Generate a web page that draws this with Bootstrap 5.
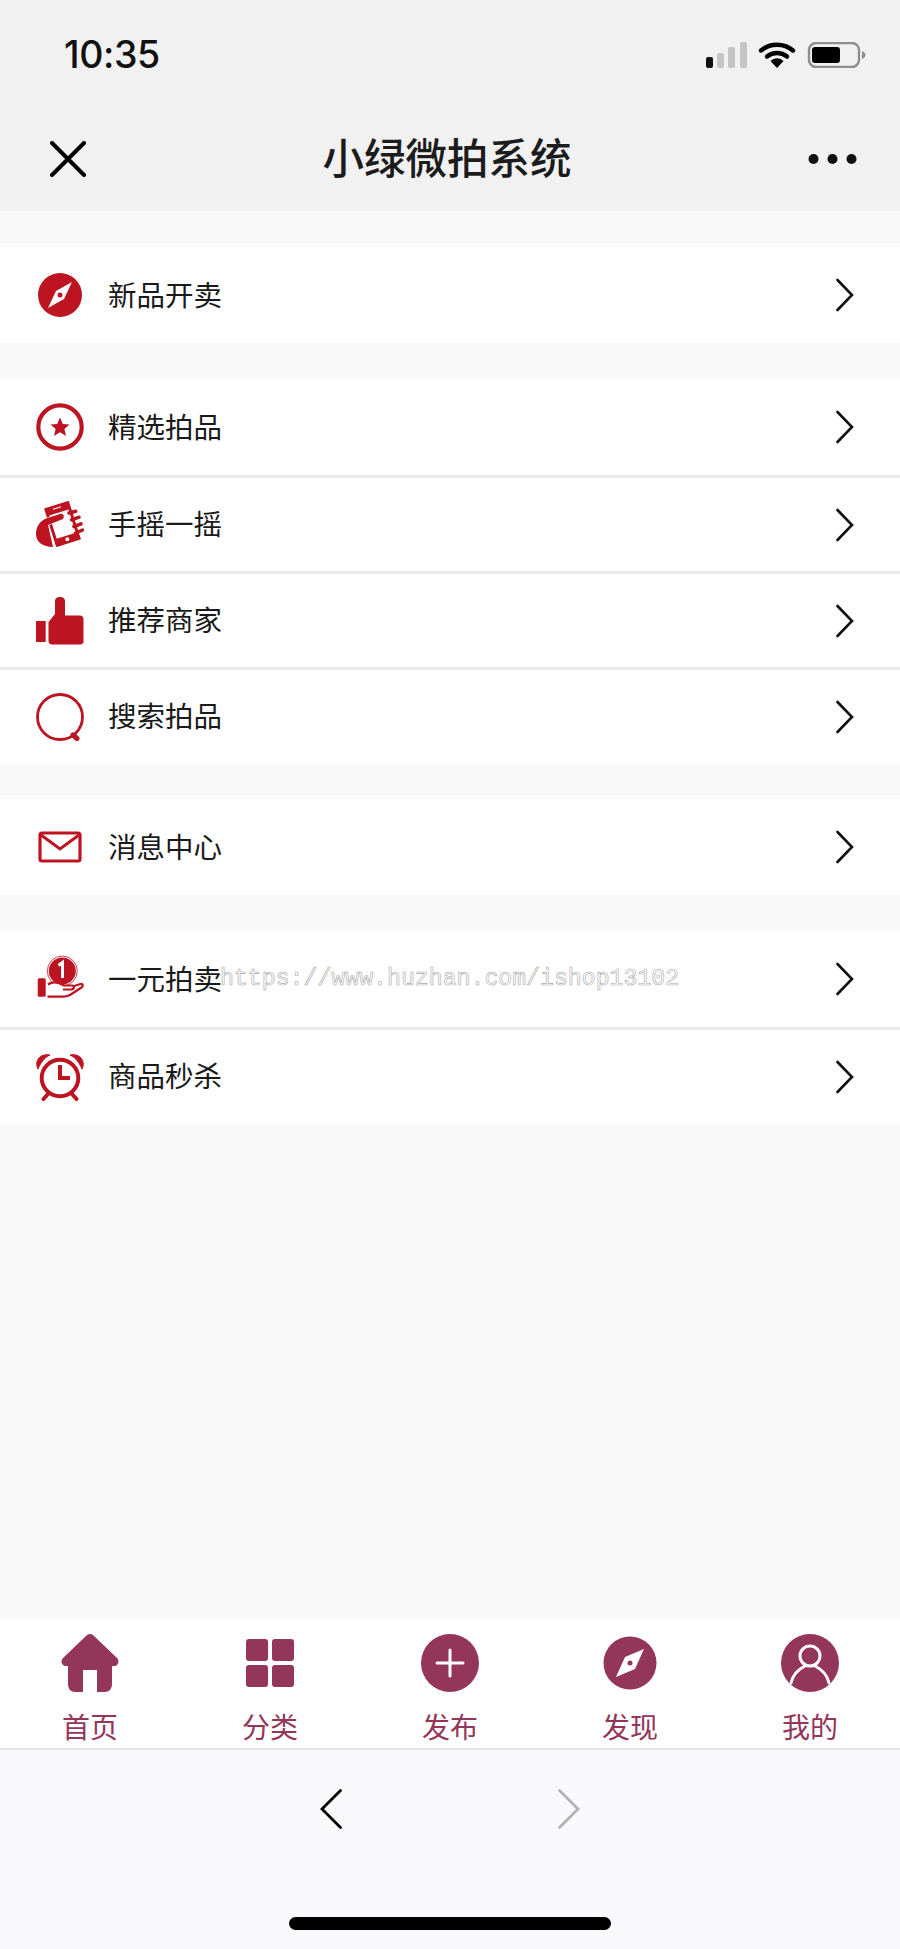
<!DOCTYPE html>
<html lang="zh-CN">
<head>
    <meta charset="UTF-8">
    <meta name="viewport" content="width=device-width, initial-scale=1.0">
    <link href="https://cdn.jsdelivr.net/npm/bootstrap@5.3.3/dist/css/bootstrap.min.css" rel="stylesheet">
    <title>小绿微拍系统</title>
    <style>
        body {
            background-color: #f9f9f9;
            font-family: "Liberation Sans", "Noto Sans CJK SC", sans-serif;
            height: 1949px;
        }
        .wx-head {
            background-color: #f1f1f1;
            height: 211px;
        }
        .status-line {
            height: 106px;
            padding: 4px 34px 0 64px;
        }
        .clock-text {
            font-family: Inter, "Liberation Sans", sans-serif;
            font-size: 37.5px;
            font-weight: 500;
            color: #111;
            letter-spacing: -0.4px;
        }
        .title-line {
            height: 105px;
            padding: 0 43px 0 50px;
        }
        .title-text {
            font-size: 41.5px;
            font-weight: 500;
            color: #1c1c1c;
            line-height: 1;
            margin-bottom: 0;
            padding-top: 2px;
        }
        .menu-block {
            background-color: #fff;
            margin-top: 36px;
        }
        .menu-row {
            height: 96px;
            padding: 0 46px 0 36px;
        }
        .menu-row + .menu-row {
            border-top: 3px solid #ececec;
        }
        .menu-ico {
            width: 48px;
            height: 48px;
            margin-right: 24px;
            flex-shrink: 0;
            color: #bc1420;
        }
        .menu-text {
            font-size: 28.5px;
            color: #1a1a1a;
            padding-top: 2px;
        }
        .mark-text {
            position: absolute;
            left: 220px;
            top: 964px;
            font-family: "Liberation Mono", monospace;
            font-size: 23.2px;
            line-height: 30px;
            color: transparent;
            -webkit-text-stroke: 0.6px #a8a8a8;
        }
        .tab-strip {
            background-color: #fff;
            height: 131px;
            border-bottom: 2px solid #e4e4e4;
        }
        .tab-cell {
            width: 180px;
            color: #94355a;
            padding-top: 15px;
        }
        .tab-ico {
            width: 58px;
            height: 58px;
            display: block;
        }
        .tab-text {
            font-size: 28px;
            line-height: 34px;
            margin-top: 20px;
        }
        .wx-foot {
            background-color: #f9f9fb;
            height: 199px;
        }
        .foot-arrows {
            height: 167px;
            gap: 216px;
            padding-bottom: 50px;
        }
        .home-pill {
            width: 322px;
            height: 13px;
            background-color: #000;
            border-radius: 7px;
        }
    </style>
</head>
<body class="d-flex flex-column position-relative">

    <div class="wx-head">
        <div class="status-line d-flex align-items-center justify-content-between">
            <span class="clock-text">10:35</span>
            <svg width="160" height="26" viewBox="0 0 160 26">
                <rect x="0" y="15" width="7" height="11" rx="2" fill="#111"/>
                <rect x="11" y="11" width="7" height="15" rx="2" fill="#c4c4c4"/>
                <rect x="22" y="5" width="7" height="21" rx="2" fill="#c4c4c4"/>
                <rect x="34" y="0" width="7" height="26" rx="2" fill="#c4c4c4"/>
                <path d="M55 8.5 A 25 25 0 0 1 87 8.5" fill="none" stroke="#000" stroke-width="4.4" stroke-linecap="round"/>
                <path d="M61 14.5 A 16 16 0 0 1 81 14.5" fill="none" stroke="#000" stroke-width="4.4" stroke-linecap="round"/>
                <path d="M64.5 19 A 9 9 0 0 1 77.5 19 L71 26 Z" fill="#000"/>
                <rect x="103" y="1" width="50" height="24" rx="7" fill="none" stroke="#8e8e8e" stroke-width="2.4"/>
                <rect x="106" y="5" width="28" height="16" rx="3" fill="#000"/>
                <path d="M156 9 C158.500 10 159.500 11.500 159.500 13 C159.500 14.500 158.500 16 156 17 Z" fill="#8e8e8e"/>
            </svg>
        </div>
        <div class="title-line d-flex align-items-center justify-content-between">
            <svg width="36" height="36" viewBox="0 0 36 36">
                <path d="M2 2 L34 34 M34 2 L2 34" stroke="#000" stroke-width="4" stroke-linecap="round"/>
            </svg>
            <h1 class="title-text">小绿微拍系统</h1>
            <svg width="49" height="12" viewBox="0 0 49 12" fill="#111">
                <circle cx="5.500" cy="6" r="5"/>
                <circle cx="24.500" cy="6" r="5"/>
                <circle cx="43.500" cy="6" r="5"/>
            </svg>
        </div>
    </div>

    <div class="menu-block">
        <div class="menu-row d-flex align-items-center">
            <svg class="menu-ico" viewBox="0 0 48 48">
                <circle cx="24" cy="24" r="22" fill="currentColor"/>
                <path d="M36 11 L28 28 L12 37 L20 20 Z" fill="#fff"/>
                <circle cx="24" cy="24" r="2.500" fill="currentColor"/>
            </svg>
            <span class="menu-text flex-grow-1">新品开卖</span>
            <svg width="18" height="34" viewBox="0 0 18 34"><path d="M1.500 2 L16 17 L1.500 32" fill="none" stroke="#111" stroke-width="2.600" stroke-linecap="round"/></svg>
        </div>
    </div>

    <div class="menu-block">
        <div class="menu-row d-flex align-items-center">
            <svg class="menu-ico" viewBox="0 0 48 48">
                <circle cx="24" cy="24" r="21.700" fill="none" stroke="currentColor" stroke-width="4.200"/>
                <path d="M24 14.500 L26.800 21 L33.500 21.500 L28.400 26 L30 33 L24 29.300 L18 33 L19.600 26 L14.500 21.500 L21.200 21 Z" fill="currentColor"/>
            </svg>
            <span class="menu-text flex-grow-1">精选拍品</span>
            <svg width="18" height="34" viewBox="0 0 18 34"><path d="M1.500 2 L16 17 L1.500 32" fill="none" stroke="#111" stroke-width="2.600" stroke-linecap="round"/></svg>
        </div>
        <div class="menu-row d-flex align-items-center">
            <svg class="menu-ico" viewBox="0 0 48 48">
                <path d="M9 8 L32.300 0.700 L44 37.800 L20.700 45.200 Z" fill="currentColor" stroke="currentColor" stroke-width="1.500" stroke-linejoin="round"/>
                <path d="M13.350 14.500 L32.450 8.520 L39.800 31.760 L20.700 37.840 Z" fill="#fff"/>
                <circle cx="31.300" cy="38.200" r="2" fill="#fff"/>
                <path d="M17 8.200 L25 5.700" stroke="#fff" stroke-width="1.200"/>
                <path d="M24 13 L10 17.500 C3 20 0 27 0 33 C0 41 7 46 17 46 L12 24 L27 18 C29 15 27 12 24 13 Z" fill="currentColor" stroke="#fff" stroke-width="1.200" paint-order="stroke"/>
                <path d="M33 12 L39.700 10.200 M35.500 18.800 L43 16.200 M38 25.500 L45 22.800 M39.700 32 L46.500 29" stroke="currentColor" stroke-width="3.500" stroke-linecap="round"/>
            </svg>
            <span class="menu-text flex-grow-1">手摇一摇</span>
            <svg width="18" height="34" viewBox="0 0 18 34"><path d="M1.500 2 L16 17 L1.500 32" fill="none" stroke="#111" stroke-width="2.600" stroke-linecap="round"/></svg>
        </div>
        <div class="menu-row d-flex align-items-center">
            <svg class="menu-ico" viewBox="0 0 48 48">
                <rect x="0" y="24" width="9.700" height="21" fill="currentColor"/>
                <path d="M12.500 25 L19 17 L19 4 C19 -1.500 29 -1.500 29 4 L29 18.500 L44 18.500 C46.500 18.500 47.500 20.500 47.500 22 L47.500 45 C47.500 46.500 46 47.500 44.500 47.500 L16 47.500 C14 47.500 12.500 46 12.500 44 Z" fill="currentColor"/>
            </svg>
            <span class="menu-text flex-grow-1">推荐商家</span>
            <svg width="18" height="34" viewBox="0 0 18 34"><path d="M1.500 2 L16 17 L1.500 32" fill="none" stroke="#111" stroke-width="2.600" stroke-linecap="round"/></svg>
        </div>
        <div class="menu-row d-flex align-items-center">
            <svg class="menu-ico" viewBox="0 0 48 48">
                <circle cx="24" cy="24" r="22.500" fill="none" stroke="currentColor" stroke-width="2.800"/>
                <path d="M37 42 L41 45.500" stroke="currentColor" stroke-width="5" stroke-linecap="round"/>
            </svg>
            <span class="menu-text flex-grow-1">搜索拍品</span>
            <svg width="18" height="34" viewBox="0 0 18 34"><path d="M1.500 2 L16 17 L1.500 32" fill="none" stroke="#111" stroke-width="2.600" stroke-linecap="round"/></svg>
        </div>
    </div>

    <div class="menu-block">
        <div class="menu-row d-flex align-items-center">
            <svg class="menu-ico" viewBox="0 0 48 48">
                <rect x="4" y="10" width="40" height="28" rx="2" fill="none" stroke="currentColor" stroke-width="3.200"/>
                <path d="M5 12 L24 26 L43 12" fill="none" stroke="currentColor" stroke-width="3"/>
            </svg>
            <span class="menu-text flex-grow-1">消息中心</span>
            <svg width="18" height="34" viewBox="0 0 18 34"><path d="M1.500 2 L16 17 L1.500 32" fill="none" stroke="#111" stroke-width="2.600" stroke-linecap="round"/></svg>
        </div>
    </div>

    <div class="menu-block">
        <div class="menu-row d-flex align-items-center">
            <svg class="menu-ico" viewBox="0 0 48 48">
                <circle cx="26.300" cy="16" r="13.500" fill="currentColor"/>
                <circle cx="26.300" cy="16" r="15" fill="none" stroke="currentColor" stroke-width="0.800"/>
                <path d="M22.500 10.500 L26.500 7.500 V23" fill="none" stroke="#fff" stroke-width="3"/>
                <rect x="1.700" y="23.300" width="8" height="18.400" rx="1.500" fill="currentColor"/>
                <path d="M12 29.500 C17 26 23 27.500 28 30.500 L36 30.500 C38.500 30.500 38.500 34 35.500 34.500 L27 34.500 M36.500 31.500 L44.500 29 C47 28.500 47.500 31 45.500 32.500 L34 40 C32 41 30 41.700 27 41.700 L11.500 41.700" fill="#fff" stroke="currentColor" stroke-width="2.200" stroke-linejoin="round"/>
            </svg>
            <span class="menu-text flex-grow-1">一元拍卖</span>
            <svg width="18" height="34" viewBox="0 0 18 34"><path d="M1.500 2 L16 17 L1.500 32" fill="none" stroke="#111" stroke-width="2.600" stroke-linecap="round"/></svg>
        </div>
        <div class="menu-row d-flex align-items-center">
            <svg class="menu-ico" viewBox="0 0 48 48">
                <circle cx="24" cy="25" r="18.300" fill="none" stroke="currentColor" stroke-width="4"/>
                <path d="M24 12 V25 H34" fill="none" stroke="currentColor" stroke-width="4"/>
                <path d="M2 16 C-2 8 4 0 14 2 C9 4 5 9 2 16 Z M46 16 C50 8 44 0 34 2 C39 4 43 9 46 16 Z" fill="currentColor" stroke="currentColor" stroke-width="1"/>
                <path d="M12 41 L7.500 46 M36 41 L40.500 46" stroke="currentColor" stroke-width="4" stroke-linecap="round"/>
            </svg>
            <span class="menu-text flex-grow-1">商品秒杀</span>
            <svg width="18" height="34" viewBox="0 0 18 34"><path d="M1.500 2 L16 17 L1.500 32" fill="none" stroke="#111" stroke-width="2.600" stroke-linecap="round"/></svg>
        </div>
    </div>

    <div class="mark-text">https://www.huzhan.com/ishop13102</div>

    <div class="flex-grow-1"></div>

    <div class="tab-strip d-flex">
        <div class="tab-cell d-flex flex-column align-items-center">
            <svg class="tab-ico" viewBox="0 0 58 58" fill="currentColor">
                <path d="M29 0 C31 0 32 1 33 2 L56 24 C59 27 57 32 53 32 L51 32 L51 50 C51 55 48 58 44 58 L36 58 L36 36 L22 36 L22 58 L14 58 C10 58 7 55 7 50 L7 32 L5 32 C1 32 -1 27 2 24 L25 2 C26 1 27 0 29 0 Z"/>
            </svg>
            <span class="tab-text">首页</span>
        </div>
        <div class="tab-cell d-flex flex-column align-items-center">
            <svg class="tab-ico" viewBox="0 0 58 58" fill="currentColor">
                <rect x="5" y="5" width="22" height="22" rx="3"/>
                <rect x="31" y="5" width="22" height="22" rx="3"/>
                <rect x="5" y="31" width="22" height="22" rx="3"/>
                <rect x="31" y="31" width="22" height="22" rx="3"/>
            </svg>
            <span class="tab-text">分类</span>
        </div>
        <div class="tab-cell d-flex flex-column align-items-center">
            <svg class="tab-ico" viewBox="0 0 58 58">
                <circle cx="29" cy="29" r="29" fill="currentColor"/>
                <path d="M29 16 V42 M16 29 H42" stroke="#fff" stroke-width="3" stroke-linecap="round"/>
            </svg>
            <span class="tab-text">发布</span>
        </div>
        <div class="tab-cell d-flex flex-column align-items-center">
            <svg class="tab-ico" viewBox="0 0 58 58">
                <circle cx="29" cy="29" r="26.500" fill="currentColor"/>
                <path d="M43 15 L34 35 L15 43 L24 23 Z" fill="#fff"/>
                <circle cx="29" cy="29" r="2.500" fill="currentColor"/>
            </svg>
            <span class="tab-text">发现</span>
        </div>
        <div class="tab-cell d-flex flex-column align-items-center">
            <svg class="tab-ico" viewBox="0 0 58 58">
                <circle cx="29" cy="29" r="29" fill="currentColor"/>
                <circle cx="29" cy="22" r="10" fill="none" stroke="#fff" stroke-width="3"/>
                <path d="M10 49 C12 39 20 34 24 32 M48 49 C46 39 38 34 34 32" fill="none" stroke="#fff" stroke-width="3" stroke-linecap="round"/>
            </svg>
            <span class="tab-text">我的</span>
        </div>
    </div>

    <div class="wx-foot d-flex flex-column align-items-center">
        <div class="foot-arrows d-flex align-items-center">
            <svg width="22" height="40" viewBox="0 0 22 40"><path d="M20.500 1.500 L2 20 L20.500 38.500" fill="none" stroke="#000" stroke-width="2.800" stroke-linecap="round"/></svg>
            <svg width="22" height="40" viewBox="0 0 22 40"><path d="M1.500 1.500 L20 20 L1.500 38.500" fill="none" stroke="#b3b3b3" stroke-width="2.800" stroke-linecap="round"/></svg>
        </div>
        <div class="home-pill"></div>
    </div>

    <script src="https://cdn.jsdelivr.net/npm/bootstrap@5.3.3/dist/js/bootstrap.bundle.min.js"></script>
</body>
</html>
